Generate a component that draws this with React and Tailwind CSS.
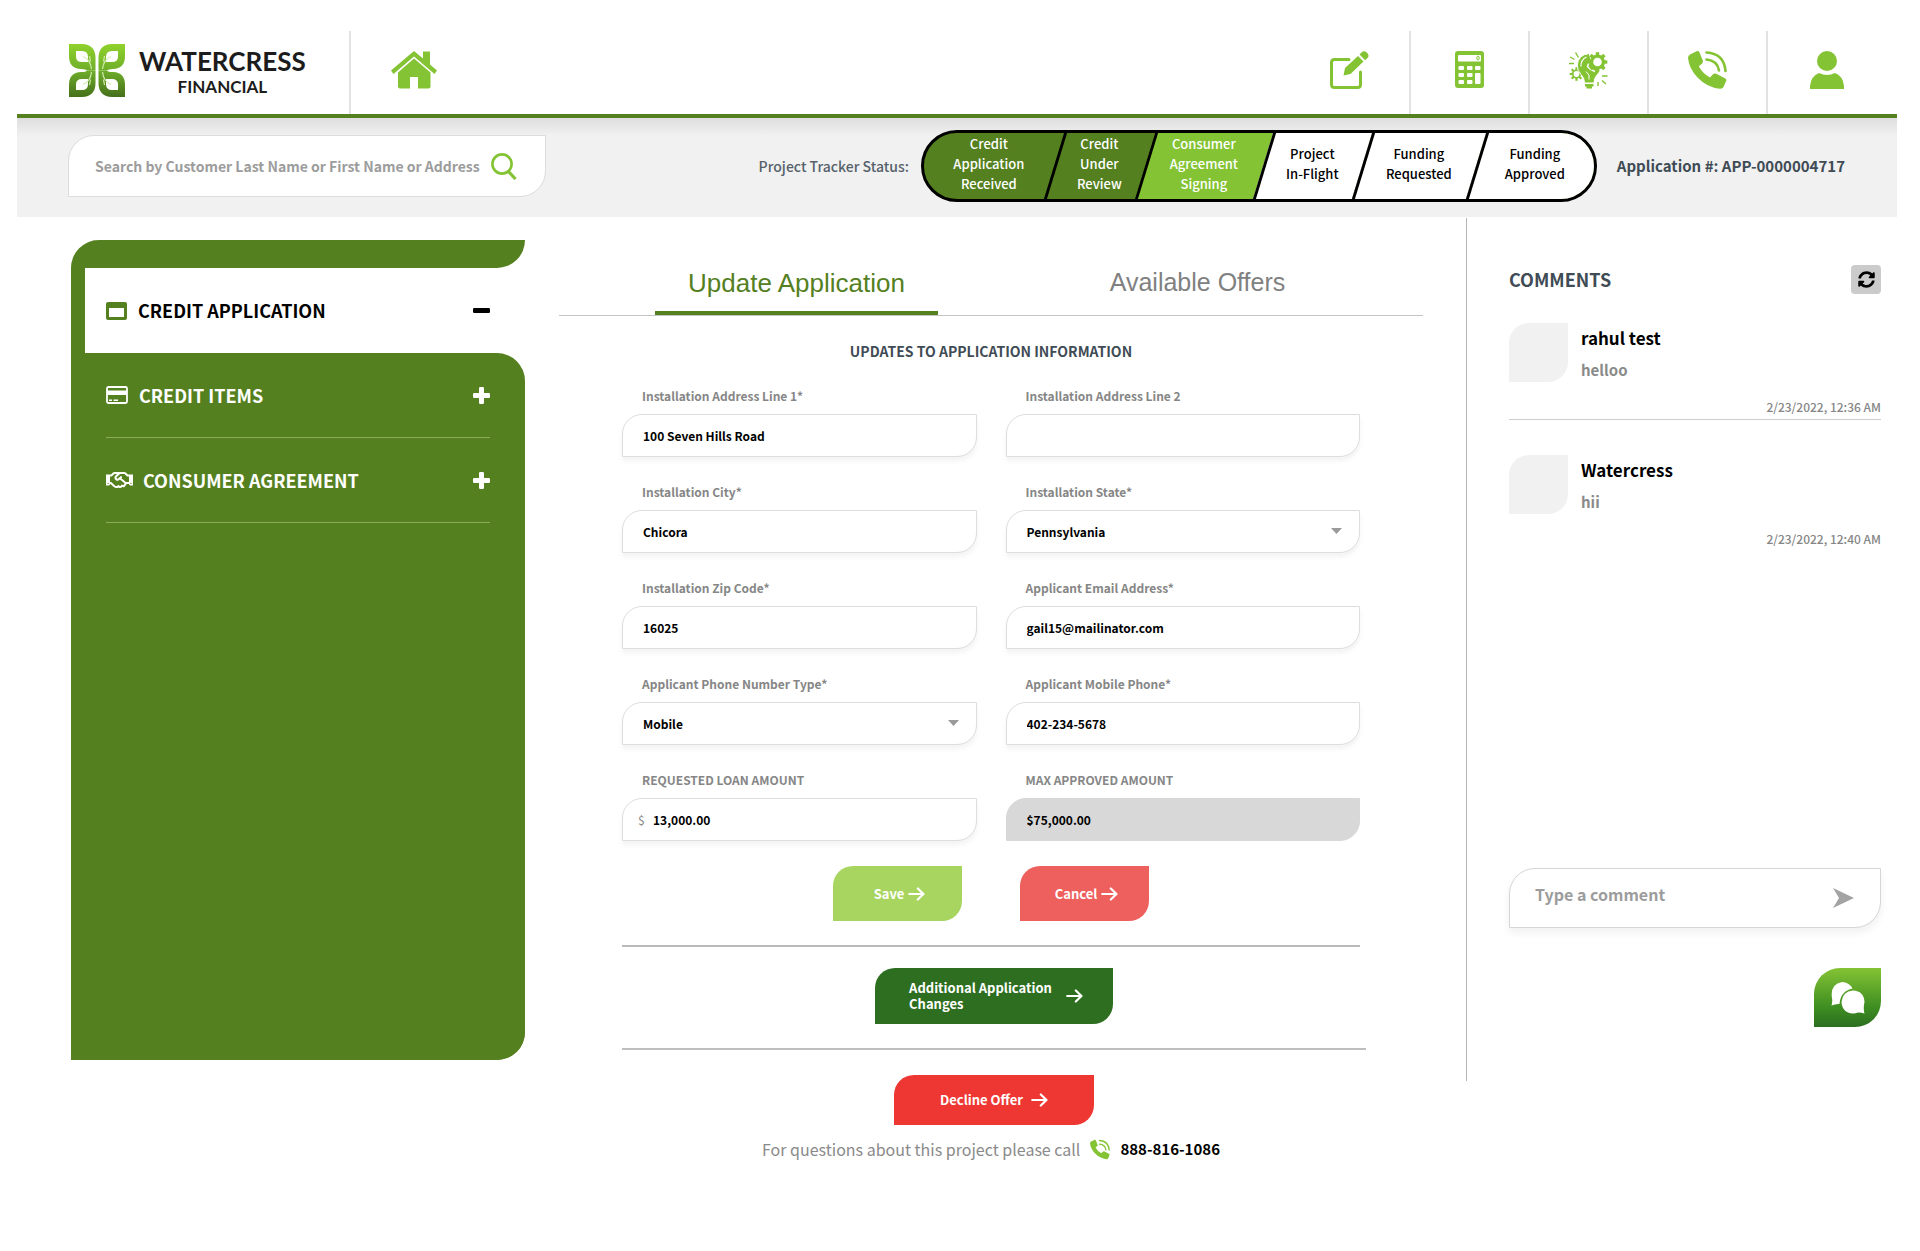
import React from "react";
import { FaRegHandshake, FaSyncAlt } from "react-icons/fa";

const GREEN = "#84c334";

function LogoMark() {
  const flips = [undefined, "translate(56 0) scale(-1 1)", "translate(0 53) scale(1 -1)", "translate(56 53) scale(-1 -1)"];
  return (
    <svg width="56" height="53" viewBox="0 0 56 53" aria-hidden="true">
      <defs>
        <linearGradient id="leafUp" gradientUnits="userSpaceOnUse" x1="0" y1="0" x2="0" y2="53">
          <stop offset="0" stopColor="#8fd22c" />
          <stop offset="0.5" stopColor="#6fae2a" />
          <stop offset="1" stopColor="#46701b" />
        </linearGradient>
        <linearGradient id="leafDown" gradientUnits="userSpaceOnUse" x1="0" y1="53" x2="0" y2="0">
          <stop offset="0" stopColor="#8fd22c" />
          <stop offset="0.5" stopColor="#6fae2a" />
          <stop offset="1" stopColor="#46701b" />
        </linearGradient>
      </defs>
      {flips.map((flip, i) => (
        <g key={i} transform={flip}>
          <path
            fillRule="evenodd"
            fill={i < 2 ? "url(#leafUp)" : "url(#leafDown)"}
            d="M0 0H13Q26.500 0.500 26.500 14V26.600H18Q17 25 12 25Q0 24.500 0 12ZM7 7V12.500Q7 18 13 18H19V13Q19 7 13 7Z"
          />
          <path d="M14 12.500Q21.500 15.500 22.500 25M20.500 12 21.500 17.500" stroke="#d3ecb0" strokeWidth="1.200" fill="none" />
        </g>
      ))}
    </svg>
  );
}

function HomeIcon() {
  return (
    <svg width="46" height="38" viewBox="0 0 46 38" fill={GREEN} aria-hidden="true">
      <path d="M23 0 32 7.500V0.500H39V13.500L46 19.500 43.500 23 23 5.500 2.500 23 0 19.500Z" />
      <path d="M23 7.500 39.500 21.500V35.500Q39.500 37.500 37.500 37.500H27V26H19V37.500H9Q7 37.500 7 35.500V21.500Z" />
    </svg>
  );
}

function EditIcon() {
  return (
    <svg width="39" height="38" viewBox="0 0 39 38" aria-hidden="true">
      <path d="M19 8.500H4.500Q1.500 8.500 1.500 11.500V33.500Q1.500 36.500 4.500 36.500H27.500Q30.500 36.500 30.500 33.500V21" fill="none" stroke={GREEN} strokeWidth="3" strokeLinecap="round" />
      <path d="M13.500 24.500 15 17 28 5 33.500 10.500 20.500 23Z" fill={GREEN} />
      <path d="M29.500 3.500 31.500 1.500Q34 -1 37 1.800Q39.800 4.500 37.500 7L35.200 9.200Z" fill={GREEN} />
    </svg>
  );
}

function CalculatorIcon() {
  return (
    <svg width="29" height="37" viewBox="0 0 29 37" aria-hidden="true">
      <rect width="29" height="37" rx="3" fill={GREEN} />
      <g fill="#fff">
        <rect x="3" y="4" width="23" height="6.500" rx="1" />
        <rect x="3.500" y="15" width="5.500" height="4" rx="1" />
        <rect x="12" y="15" width="5.500" height="4" rx="1" />
        <rect x="20" y="15" width="5.500" height="4" rx="1" />
        <rect x="3.500" y="22" width="5.500" height="4" rx="1" />
        <rect x="12" y="22" width="5.500" height="4" rx="1" />
        <rect x="20" y="22" width="5.500" height="11" rx="1" />
        <rect x="3.500" y="29" width="5.500" height="4" rx="1" />
        <rect x="12" y="29" width="5.500" height="4" rx="1" />
      </g>
      <ellipse cx="23" cy="7" rx="1.200" ry="2" fill="none" stroke={GREEN} strokeWidth="1" />
    </svg>
  );
}

function Gear({ cx, cy, r, hole, tooth }) {
  return (
    <g>
      {[0, 45, 90, 135].map((a) => (
        <rect key={a} x={cx - tooth / 2} y={cy - r - 2.2} width={tooth} height={2 * r + 4.4} transform={`rotate(${a} ${cx} ${cy})`} fill={GREEN} />
      ))}
      <circle cx={cx} cy={cy} r={r} fill={GREEN} />
      <circle cx={cx} cy={cy} r={hole} fill="#fff" />
    </g>
  );
}

function IdeaIcon() {
  return (
    <svg width="40" height="38" viewBox="0 0 40 38" aria-hidden="true">
      <Gear cx={7.500} cy={23} r={4.600} hole={2.900} tooth={2.200} />
      <path d="M20 2.500Q9 4 8.300 14Q8 19.500 12 23.500Q15.500 27 15.500 32H25Q25 27 28 24Q30.500 21.500 31 19L24 14Z" fill={GREEN} stroke="#fff" strokeWidth="1" />
      <path d="M17.500 6Q11.500 9 12 15.500" stroke="#fff" strokeWidth="1.200" fill="none" />
      <path d="M20 11 18.500 15.500 21.500 18.500 26 20.500" stroke="#fff" strokeWidth="1.400" fill="none" />
      <path d="M17 20.500 20 24V28.500" stroke="#fff" strokeWidth="1" fill="none" />
      <Gear cx={28.500} cy={11} r={7.600} hole={4.300} tooth={3.400} />
      <path d="M16 33H24.500V35.500H23V37.500H17.500V35.500H16Z" fill={GREEN} />
      <path d="M6.500 1.500 9.500 6.500M1 6 5.500 8.500M0 12.500H5M33 25H38.500M33 29.500 37 33M29 31V35" stroke={GREEN} strokeWidth="1.400" fill="none" />
    </svg>
  );
}

function CallIcon({ className }) {
  return (
    <svg viewBox="0 0 39 38" className={className} aria-hidden="true">
      <path d="M2 3.500 8.500 0.300Q10.500 -0.500 11.500 1.500L14.800 9.500Q15.400 11.400 13.800 12.700L10.800 15.300Q14.500 22.500 22 26.500L25 23.200Q26.300 21.800 28.200 22.800L37 27.200Q39 28.300 38 30.300L35.500 36Q34.500 38 32 37.800Q19 36.500 9.500 26.500Q1 17.500 0 7Q0 4.500 2 3.500Z" fill={GREEN} />
      <path d="M18.500 1.500Q36 2.500 37.500 20" fill="none" stroke={GREEN} strokeWidth="2.600" strokeLinecap="round" />
      <path d="M18.500 8.500Q29.500 9.500 31 19.500" fill="none" stroke={GREEN} strokeWidth="2.600" strokeLinecap="round" />
    </svg>
  );
}

function UserIcon() {
  return (
    <svg width="34" height="38" viewBox="0 0 34 38" fill={GREEN} aria-hidden="true">
      <ellipse cx="17" cy="10" rx="10" ry="10" />
      <path d="M0 38V35Q1 25 9 22Q17 26 25 22Q33 25 34 35V38Z" />
    </svg>
  );
}

function SearchIcon() {
  return (
    <svg width="26" height="27" viewBox="0 0 26 27" fill="none" stroke={GREEN} strokeWidth="2.600" aria-hidden="true">
      <circle cx="11" cy="11" r="9.600" />
      <path d="M17 18 24.500 26" strokeWidth="3.200" />
    </svg>
  );
}

function Arrow() {
  return (
    <svg width="17" height="14" viewBox="0 0 17 14" fill="none" stroke="currentColor" strokeWidth="2.200" strokeLinecap="round" strokeLinejoin="round" className="shrink-0" aria-hidden="true">
      <path d="M1.200 7H15.500M9.800 1.500 15.500 7 9.800 12.500" />
    </svg>
  );
}

function WindowIcon() {
  return (
    <svg width="21" height="18" viewBox="0 0 21 18" aria-hidden="true">
      <path fillRule="evenodd" fill="#55801f" d="M2 0H19Q21 0 21 2V16Q21 18 19 18H2Q0 18 0 16V2Q0 0 2 0ZM3 6V15H18V6Z" />
    </svg>
  );
}

function CardIcon() {
  return (
    <svg width="22" height="18" viewBox="0 0 22 18" aria-hidden="true">
      <rect x="1" y="1" width="20" height="16" rx="1.500" fill="none" stroke="#fff" strokeWidth="1.800" />
      <path d="M1 4.500H21V9H1ZM3 13.500H6V15H3ZM7.500 13.500H12V15H7.500Z" fill="#fff" />
    </svg>
  );
}

function ToggleSign({ open }) {
  return (
    <svg width="17" height="17" viewBox="0 0 17 17" fill="currentColor" aria-hidden="true">
      <rect y="6" width="17" height="5" rx="1.200" />
      {!open && <rect x="6" width="5" height="17" rx="1.200" />}
    </svg>
  );
}

const stages = [
  { text: ["Credit", "Application", "Received"], cls: "w-[130px] text-white", bg: "" },
  { text: ["Credit", "Under", "Review"], cls: "w-[91px] text-white", bg: "before:bg-[#55801f] before:border-l-3" },
  { text: ["Consumer", "Agreement", "Signing"], cls: "w-[118px] text-white", bg: "before:bg-[#84c334] before:border-l-3" },
  { text: ["Project", "In-Flight"], cls: "w-[99px] text-black", bg: "before:bg-white before:border-l-3" },
  { text: ["Funding", "Requested"], cls: "w-[114px] text-black", bg: "before:bg-white before:border-l-3" },
  { text: ["Funding", "Approved"], cls: "w-[118px] text-black", bg: "before:bg-white before:border-l-3 before:-right-6" },
];

const fields = [
  { id: "address1", label: "Installation Address Line 1*", value: "100 Seven Hills Road" },
  { id: "address2", label: "Installation Address Line 2", value: "" },
  { id: "city", label: "Installation City*", value: "Chicora" },
  { id: "state", label: "Installation State*", value: "Pennsylvania", type: "select" },
  { id: "zip", label: "Installation Zip Code*", value: "16025" },
  { id: "email", label: "Applicant Email Address*", value: "gail15@mailinator.com" },
  { id: "phoneType", label: "Applicant Phone Number Type*", value: "Mobile", type: "select" },
  { id: "phone", label: "Applicant Mobile Phone*", value: "402-234-5678" },
  { id: "requested", label: "REQUESTED LOAN AMOUNT", value: "13,000.00", prefix: "$" },
  { id: "max", label: "MAX APPROVED AMOUNT", value: "$75,000.00", disabled: true },
];

const boxBase = "h-[43px] w-full rounded-tl-[20px] rounded-br-[20px] border text-[12px] font-bold text-black outline-none";

function Field({ id, label, value, type, prefix, disabled }) {
  let control;
  if (type === "select") {
    control = (
      <div className="relative">
        <select id={id} defaultValue={value} className={`${boxBase} appearance-none border-[#dedede] bg-white pr-10 pl-5 shadow-[0_4px_5px_rgba(0,0,0,0.05)]`}>
          <option>{value}</option>
        </select>
        <svg width="11" height="6" viewBox="0 0 11 6" className="pointer-events-none absolute top-[18px] right-[18px]" fill="#9a9a9a" aria-hidden="true">
          <path d="M0 0H11L5.500 6Z" />
        </svg>
      </div>
    );
  } else if (prefix) {
    control = (
      <div className={`${boxBase} flex items-center border-[#dedede] bg-white pl-[15px] shadow-[0_4px_5px_rgba(0,0,0,0.05)]`}>
        <span className="w-[15px] font-normal text-[#8a8a8a]">{prefix}</span>
        <input id={id} defaultValue={value} className="min-w-0 flex-1 outline-none" />
      </div>
    );
  } else {
    control = (
      <input
        id={id}
        defaultValue={value}
        disabled={disabled}
        className={`${boxBase} px-5 ${disabled ? "border-[#d8d8d8] bg-[#d8d8d8]" : "border-[#dedede] bg-white shadow-[0_4px_5px_rgba(0,0,0,0.05)]"}`}
      />
    );
  }
  return (
    <div className="flex flex-col gap-[9px]">
      <label htmlFor={id} className="pl-5 text-[12px] leading-[18px] font-bold text-[#868686]">{label}</label>
      {control}
    </div>
  );
}

const comments = [
  { name: "rahul test", text: "helloo", date: "2/23/2022, 12:36 AM" },
  { name: "Watercress", text: "hii", date: "2/23/2022, 12:40 AM" },
];

const actions = [
  { label: "Edit application", icon: <EditIcon /> },
  { label: "Calculator", icon: <CalculatorIcon /> },
  { label: "Ideas", icon: <IdeaIcon /> },
  { label: "Call", icon: <CallIcon className="h-[38px] w-[39px]" /> },
  { label: "Profile", icon: <UserIcon /> },
];

export default function App() {
  return (
    <div className="bg-white pt-[31px] pr-[23px] pb-20 pl-[17px] font-['Noto_Sans_CJK_SC','Noto_Sans',sans-serif] text-[#3f4b55]">
      <header className="flex h-[87px] border-b-4 border-[#55801f] pr-3">
        <a href="#" className="flex w-[332px] items-start gap-[14px] pt-[13px] pl-[52px]">
          <LogoMark />
          <span className="flex flex-col items-center pt-px font-['Lato',sans-serif] font-bold text-[#1c1c1c]">
            <span className="text-[26px] leading-[32px]">WATERCRESS</span>
            <span className="text-[17px] leading-[20px]">FINANCIAL</span>
          </span>
        </a>
        <a href="#" aria-label="Home" className="flex w-[127px] items-start justify-center border-l-2 border-[#e2e2e2] pt-5">
          <HomeIcon />
        </a>
        <nav className="ml-auto flex">
          {actions.map((a, i) => (
            <button key={a.label} aria-label={a.label} className={`flex w-[119px] items-start justify-center pt-5 ${i > 0 ? "border-l-2 border-[#e2e2e2]" : ""}`}>
              {a.icon}
            </button>
          ))}
        </nav>
      </header>

      <div className="flex h-[99px] items-center bg-linear-to-b from-[#dedede] via-[#f1f1f1] via-18% to-[#f1f1f1] pr-[52px] pb-[3px] pl-[51px]">
        <form className="flex h-[62px] w-[478px] items-center rounded-tl-[26px] rounded-br-[26px] border border-[#dcdcdc] bg-white pr-[28px] pl-[26px]">
          <input aria-label="Search customers" placeholder="Search by Customer Last Name or First Name or Address" className="min-w-0 flex-1 text-[14px] font-bold text-[#9c9c9c] outline-none placeholder:text-[#9c9c9c]" />
          <button type="button" aria-label="Search">
            <SearchIcon />
          </button>
        </form>
        <div className="ml-auto flex items-center">
          <span className="text-[14px] font-medium text-[#56616b]">Project Tracker Status:</span>
          <ol className="ml-3 flex h-[72px] overflow-hidden rounded-full border-3 border-black bg-[#55801f] text-[13px] leading-[20px] font-medium">
            {stages.map((s) => (
              <li key={s.text.join(" ")} className={`relative flex flex-col items-center justify-center pb-1 text-center before:absolute before:inset-0 before:-skew-x-[17deg] before:border-black ${s.cls} ${s.bg}`}>
                {s.text.map((t) => (
                  <span key={t} className="relative">{t}</span>
                ))}
              </li>
            ))}
          </ol>
          <span className="ml-5 text-[15px] font-bold">Application #: APP-0000004717</span>
        </div>
      </div>

      <div className="flex items-start">
        <nav className="mt-[23px] ml-[54px] flex min-h-[820px] w-[454px] flex-col overflow-hidden rounded-tl-[28px] rounded-br-[28px] bg-[#55801f] pl-[14px] text-[18px] font-bold text-white">
          <div className="bg-white">
            <div className="h-[28px] rounded-br-[28px] bg-[#55801f]" />
          </div>
          <button className="flex h-[85px] items-center bg-white pr-[35px] pl-[21px] text-black">
            <WindowIcon />
            <span className="mr-auto ml-[11px]">CREDIT APPLICATION</span>
            <ToggleSign open />
          </button>
          <div className="flex flex-1 flex-col bg-linear-to-b from-white from-50% to-transparent to-50%">
            <div className="flex-1 rounded-tr-[28px] bg-[#55801f] pr-[35px] pl-[21px]">
              <button className="flex h-[85px] w-full items-center border-b border-[#8bab5b]">
                <CardIcon />
                <span className="mr-auto ml-[11px]">CREDIT ITEMS</span>
                <ToggleSign />
              </button>
              <button className="flex h-[85px] w-full items-center border-b border-[#8bab5b]">
                <FaRegHandshake className="h-[22px] w-[27px]" />
                <span className="mr-auto ml-[10px]">CONSUMER AGREEMENT</span>
                <ToggleSign />
              </button>
            </div>
          </div>
        </nav>

        <main className="mr-[43px] ml-[34px] min-w-0 flex-1">
          <div role="tablist" className="flex h-[99px] justify-center gap-[118px] border-b border-[#c4c4c4] pl-3 font-['Liberation_Sans',Arial,sans-serif]">
            <button role="tab" aria-selected="true" className="w-[283px] border-b-4 border-[#55801f] pt-[38px] text-[26px] text-[#55801f]">Update Application</button>
            <button role="tab" aria-selected="false" className="w-[283px] border-b-4 border-transparent pt-[38px] text-[25px] text-[#808080]">Available Offers</button>
          </div>
          <div className="px-[63px]">
            <h1 className="mt-[23px] text-center text-[14px] leading-6 font-bold">UPDATES TO APPLICATION INFORMATION</h1>
            <div className="mt-6 grid grid-cols-2 gap-x-[29px] gap-y-[26px]">
              {fields.map((f) => (
                <Field key={f.id} {...f} />
              ))}
            </div>
            <div className="mt-[25px] flex justify-center gap-[58px] text-[13px] font-bold text-white">
              <button className="flex h-[55px] w-[129px] items-center justify-center gap-1 rounded-tl-[20px] rounded-br-[20px] bg-[#a7d560] pl-1">
                Save <Arrow />
              </button>
              <button className="flex h-[55px] w-[129px] items-center justify-center gap-1 rounded-tl-[20px] rounded-br-[20px] bg-[#ee605d] pl-1">
                Cancel <Arrow />
              </button>
            </div>
            <hr className="mt-6 border-t-2 border-[#b9b9b9]" />
            <div className="-mr-[6px] flex flex-col items-center">
              <button className="mt-[21px] flex h-14 w-[238px] items-center justify-center gap-[14px] rounded-tl-[20px] rounded-br-[20px] bg-[#2e6e20] pl-1 text-left text-[13px] leading-4 font-bold text-white">
                <span>
                  Additional Application
                  <br />
                  Changes
                </span>
                <Arrow />
              </button>
              <hr className="mt-6 w-full border-t-2 border-[#bfbfbf]" />
              <button className="mt-[25px] flex h-[50px] w-[200px] items-center justify-center gap-2 rounded-tl-[20px] rounded-br-[20px] bg-[#ee3733] text-[13px] font-bold text-white">
                Decline Offer <Arrow />
              </button>
            </div>
            <p className="mt-[10px] flex items-center justify-center gap-[10px] text-[16px] leading-7 text-[#8a8a8a]">
              For questions about this project please call
              <CallIcon className="h-[21px] w-[20px]" />
              <a href="tel:888-816-1086" className="text-[15px] font-bold text-black">888-816-1086</a>
            </p>
          </div>
        </main>

        <aside className="mt-px flex min-h-[863px] w-[431px] flex-col border-l border-[#b5b5b5] pr-[16px] pb-[54px] pl-[42px]">
          <div className="mt-[47px] flex h-[29px] items-center justify-between">
            <h2 className="text-[18px] font-bold">COMMENTS</h2>
            <button aria-label="Refresh comments" className="flex h-[29px] w-[30px] items-center justify-center rounded-[4px] bg-[#cbcbcb] text-black">
              <FaSyncAlt className="size-[17px]" />
            </button>
          </div>
          <ul className="mt-[29px] flex flex-col gap-[35px]">
            {comments.map((c, i) => (
              <li key={c.name} className={`flex h-[97px] flex-col ${i === 0 ? "border-b border-[#cfcfcf]" : ""}`}>
                <div className="flex gap-[13px]">
                  <div className="size-[59px] rounded-tl-[20px] rounded-br-[20px] bg-[#f1f1f1]" />
                  <div>
                    <h3 className="text-[17px] leading-[30px] font-bold text-black">{c.name}</h3>
                    <p className="mt-[2px] text-[15px] leading-[30px] font-bold text-[#8a8a8a]">{c.text}</p>
                  </div>
                </div>
                <time className="mt-[12px] text-right text-[12px] leading-[20px] font-medium text-[#868686]">{c.date}</time>
              </li>
            ))}
          </ul>
          <form className="mt-auto flex h-[60px] items-center rounded-tl-[26px] rounded-br-[26px] border border-[#d6d6d6] bg-white pr-[26px] pl-[25px] shadow-[0_5px_8px_rgba(0,0,0,0.06)]">
            <input aria-label="Comment" placeholder="Type a comment" className="min-w-0 flex-1 pb-2 text-[16px] font-bold outline-none placeholder:text-[#9c9c9c]" />
            <button type="button" aria-label="Send comment">
              <svg width="21" height="20" viewBox="0 0 21 20" fill="#a3a3a3" aria-hidden="true">
                <path d="M0 0 21 10 0 20 6 10Z" />
              </svg>
            </button>
          </form>
          <button aria-label="Open chat" className="mt-[40px] flex h-[59px] w-[67px] items-center justify-center self-end rounded-tl-[26px] rounded-br-[26px] bg-linear-to-b from-[#84c334] via-[#3f8f22] via-65% to-[#2c6e1f]">
            <svg width="34" height="32" viewBox="0 0 34 32" aria-hidden="true">
              <path d="M0.500 23.500Q1.800 19 0.800 15Q-0.500 2 11 0Q18 0 21.500 6.500Q9.500 9 8.500 22Q5 21.500 0.500 23.500Z" fill="#fff" />
              <path d="M33.500 31.500Q29 30 27 30.500Q22 32.500 17 30.500Q10.500 27.500 10.500 20Q11.500 9.500 22 8.500Q33 9 33.500 20Q32 26 33.500 31.500Z" fill="#fff" />
            </svg>
          </button>
        </aside>
      </div>
    </div>
  );
}
